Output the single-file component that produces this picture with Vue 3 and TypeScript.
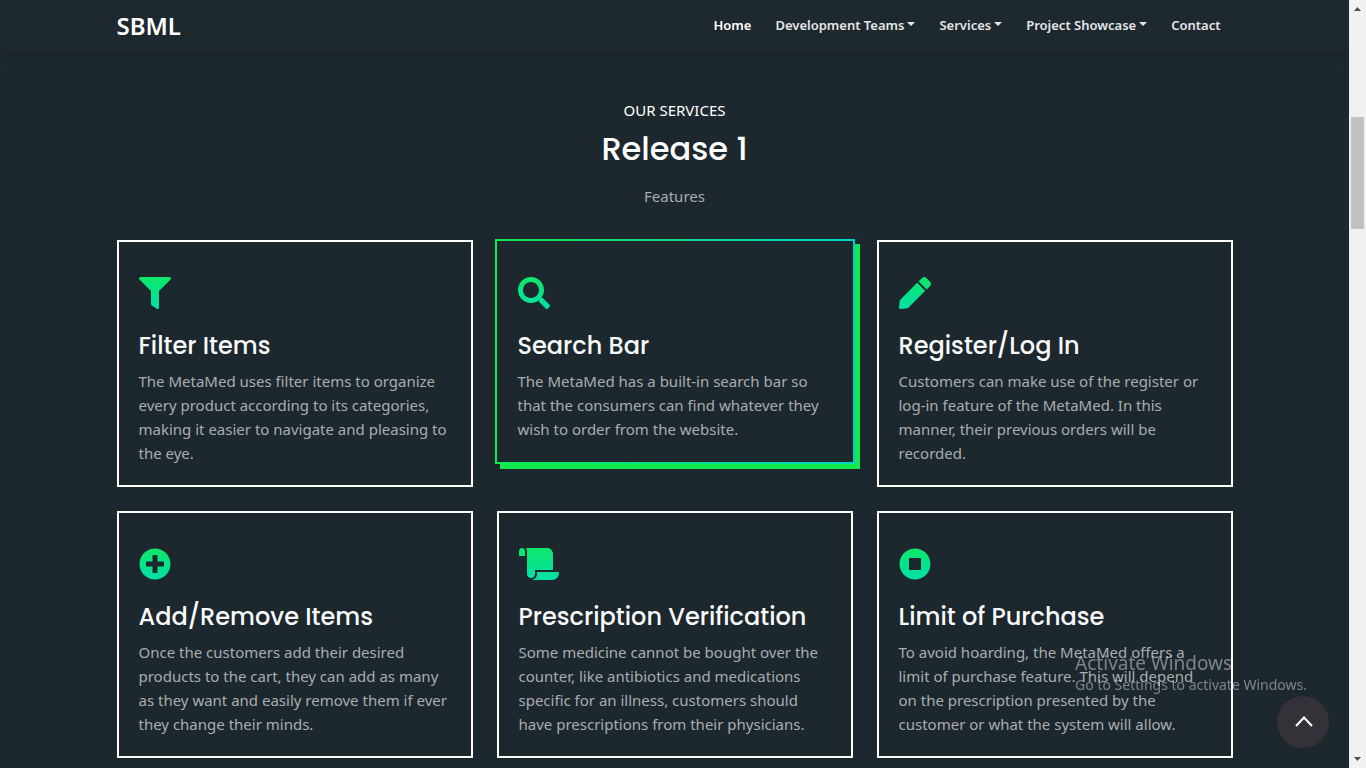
<script setup lang="ts">
interface NavItem {
  label: string
  menu: boolean
  active?: boolean
}

interface Feature {
  title: string
  text: string
  viewBox: string
  path: string
  wide?: boolean
  raised?: boolean
}

const navItems: NavItem[] = [
  { label: 'Home', menu: false, active: true },
  { label: 'Development Teams', menu: true },
  { label: 'Services', menu: true },
  { label: 'Project Showcase', menu: true },
  { label: 'Contact', menu: false },
]

const features: Feature[] = [
  {
    title: 'Filter Items',
    text: 'The MetaMed uses filter items to organize every product according to its categories, making it easier to navigate and pleasing to the eye.',
    viewBox: '0 0 512 512',
    path: 'M487.976 0H24.028C2.71 0-8.047 25.866 7.058 40.971L192 225.941V432c0 7.831 3.821 15.17 10.237 19.662l80 55.98C298.02 518.69 320 507.493 320 487.98V225.941l184.947-184.97C520.021 25.896 509.338 0 487.976 0z',
  },
  {
    title: 'Search Bar',
    text: 'The MetaMed has a built-in search bar so that the consumers can find whatever they wish to order from the website.',
    viewBox: '0 0 512 512',
    raised: true,
    path: 'M505 442.7L405.3 343c-4.5-4.5-10.6-7-17-7H372c27.6-35.3 44-79.7 44-128C416 93.1 322.9 0 208 0S0 93.1 0 208s93.1 208 208 208c48.3 0 92.7-16.4 128-44v16.3c0 6.4 2.5 12.5 7 17l99.7 99.7c9.4 9.4 24.6 9.4 33.9 0l28.3-28.3c9.4-9.4 9.4-24.6.1-34zM208 336c-70.7 0-128-57.2-128-128 0-70.7 57.2-128 128-128 70.7 0 128 57.2 128 128 0 70.7-57.2 128-128 128z',
  },
  {
    title: 'Register/Log In',
    text: 'Customers can make use of the register or log-in feature of the MetaMed. In this manner, their previous orders will be recorded.',
    viewBox: '0 0 512 512',
    path: 'M290.74 93.24l128.02 128.02-277.99 277.99-114.14 12.6C11.35 513.54-1.56 500.62.14 485.34l12.7-114.22 277.9-277.88zm207.2-19.06l-60.11-60.11c-18.75-18.75-49.16-18.75-67.91 0l-56.55 56.55 128.02 128.02 56.55-56.55c18.75-18.76 18.75-49.16 0-67.91z',
  },
  {
    title: 'Add/Remove Items',
    text: 'Once the customers add their desired products to the cart, they can add as many as they want and easily remove them if ever they change their minds.',
    viewBox: '0 0 512 512',
    path: 'M256 8C119 8 8 119 8 256s111 248 248 248 248-111 248-248S393 8 256 8zm144 276c0 6.6-5.4 12-12 12h-92v92c0 6.6-5.4 12-12 12h-56c-6.6 0-12-5.4-12-12v-92h-92c-6.6 0-12-5.4-12-12v-56c0-6.6 5.4-12 12-12h92v-92c0-6.6 5.4-12 12-12h56c6.6 0 12 5.4 12 12v92h92c6.6 0 12 5.4 12 12v56z',
  },
  {
    title: 'Prescription Verification',
    text: 'Some medicine cannot be bought over the counter, like antibiotics and medications specific for an illness, customers should have prescriptions from their physicians.',
    viewBox: '0 0 640 512',
    wide: true,
    path: 'M48 0C21.53 0 0 21.53 0 48v64c0 8.84 7.16 16 16 16h80V48C96 21.53 74.47 0 48 0zm208 412.57V352h288V96c0-52.94-43.06-96-96-96H111.59C121.74 13.41 128 29.92 128 48v368c0 38.87 34.65 69.65 74.75 63.12C234.22 474 256 444.46 256 412.57zM288 384v32c0 52.93-43.06 96-96 96h336c61.86 0 112-50.14 112-112 0-8.84-7.16-16-16-16H288z',
  },
  {
    title: 'Limit of Purchase',
    text: 'To avoid hoarding, the MetaMed offers a limit of purchase feature. This will depend on the prescription presented by the customer or what the system will allow.',
    viewBox: '0 0 512 512',
    path: 'M256 8C119 8 8 119 8 256s111 248 248 248 248-111 248-248S393 8 256 8zm96 328c0 8.8-7.2 16-16 16H176c-8.8 0-16-7.2-16-16V176c0-8.8 7.2-16 16-16h160c8.8 0 16 7.2 16 16v160z',
  },
]

const toTop = () => window.scrollTo({ top: 0, behavior: 'smooth' })
</script>

<template>
  <div class="window">
    <div class="page">
      <header class="topbar">
        <nav class="container nav">
          <a class="brand" href="#">SBML</a>
          <ul class="links">
            <li v-for="item in navItems" :key="item.label">
              <a href="#" class="link" :class="{ active: item.active }">
                {{ item.label }}<span v-if="item.menu" class="caret"></span>
              </a>
            </li>
          </ul>
        </nav>
      </header>

      <main class="container">
        <div class="intro">
          <p class="eyebrow">OUR SERVICES</p>
          <h1>Release 1</h1>
          <p class="sub">Features</p>
        </div>

        <section class="grid">
          <article v-for="(f, i) in features" :key="f.title" class="card" :class="{ raised: f.raised }">
            <svg class="icon" :class="{ wide: f.wide }" :viewBox="f.viewBox" aria-hidden="true">
              <defs>
                <linearGradient :id="'tint' + i" gradientUnits="userSpaceOnUse" x1="0" y1="0" x2="0" y2="512">
                  <stop offset="0" stop-color="#0de768" />
                  <stop offset="1" stop-color="#03dfa8" />
                </linearGradient>
              </defs>
              <path :d="f.path" :fill="`url(#tint${i})`" />
            </svg>
            <h2>{{ f.title }}</h2>
            <p>{{ f.text }}</p>
          </article>
        </section>
      </main>
    </div>

    <div class="scrollbar" aria-hidden="true">
      <svg class="arrow" viewBox="0 0 17 17"><path d="M5 11h7L8.500 7z" /></svg>
      <div class="track"><div class="thumb"></div></div>
      <svg class="arrow" viewBox="0 0 17 17"><path d="M5 6h7L8.500 10z" /></svg>
    </div>

    <div class="notice">
      <p class="notice-title">Activate Windows</p>
      <p class="notice-text">Go to Settings to activate Windows.</p>
    </div>

    <button class="to-top" type="button" aria-label="Back to top" @click="toTop">
      <svg viewBox="0 0 20 20" width="20" height="20"><path d="M3 14L11 5.500 19 14" /></svg>
    </button>
  </div>
</template>

<style>
body {
  margin: 0;
  background: #1d272e;
}
</style>

<style scoped>
.window {
  display: flex;
  height: 100vh;
  overflow: hidden;
  background: #1d272e;
  color: #fff;
  font-family: "Segoe UI", "Noto Sans", "Open Sans", sans-serif;
  font-size: 15px;
  line-height: 24px;
}
.page {
  flex: 1;
  min-width: 0;
}
.container {
  box-sizing: border-box;
  width: 100%;
  max-width: 1140px;
  margin: 0 auto;
  padding: 0 12px;
}
.topbar {
  background: #1e282f;
  box-shadow: 0 0 16px rgba(32, 28, 48, 0.2);
}
.nav {
  display: flex;
  align-items: center;
  justify-content: space-between;
  height: 51px;
}
.brand {
  color: #fff;
  font-size: 24px;
  font-weight: 600;
  text-decoration: none;
}
.links {
  display: flex;
  gap: 24px;
  margin: 0;
  padding: 0 12px 2px 0;
  list-style: none;
}
.link {
  display: flex;
  align-items: center;
  color: #e4e5e6;
  font-size: 13px;
  font-weight: 600;
  text-decoration: none;
}
.link.active {
  color: #fff;
}
.caret {
  margin: 0 0 2px 3px;
  border: 4px solid transparent;
  border-top-color: currentColor;
  border-bottom: 0;
}
.intro {
  padding: 47px 0 32px;
  text-align: center;
}
.intro p {
  margin: 0;
}
h1,
h2 {
  margin: 0;
  font-family: Poppins, Inter, sans-serif;
  font-weight: 500;
}
h1 {
  margin: 7px 0 15px;
  font-size: 32px;
  line-height: 40px;
}
.sub,
.card p {
  color: #a9adb0;
}
.grid {
  display: grid;
  grid-template-columns: repeat(3, minmax(0, 1fr));
  align-items: start;
  gap: 24px;
}
.card {
  padding: 35px 19px 20px 20px;
  border: 2px solid #fff;
}
.card.raised {
  margin: -1px -2px;
  padding: 36px 20px 21px 21px;
  border-image: linear-gradient(to right, #10ea50, #00d2c8) 1;
  box-shadow: 5px 5px 0 #10ea50;
}
.icon {
  display: block;
  width: 32px;
  height: 32px;
}
.icon.wide {
  width: 40px;
}
h2 {
  margin: 22px 0 9px;
  color: #f8f9fa;
  font-size: 24px;
  line-height: 29px;
  white-space: nowrap;
}
.card p {
  margin: 0;
}
.scrollbar {
  display: flex;
  flex-direction: column;
  flex: none;
  width: 17px;
  background: #f1f1f1;
}
.arrow {
  width: 17px;
  height: 17px;
  fill: #505050;
}
.track {
  flex: 1;
  padding: 100px 2px 0;
}
.thumb {
  height: 112px;
  background: #c1c1c1;
}
.notice {
  position: fixed;
  right: 59px;
  bottom: 73px;
  color: rgba(255, 255, 255, 0.42);
  pointer-events: none;
}
.notice p {
  margin: 0;
}
.notice .notice-title {
  font-size: 19px;
}
.notice .notice-text {
  font-size: 14px;
  line-height: 20px;
}
.to-top {
  position: fixed;
  right: 37px;
  bottom: 20px;
  display: flex;
  align-items: center;
  justify-content: center;
  width: 52px;
  height: 52px;
  padding: 0;
  border: 0;
  border-radius: 50%;
  background: #343138;
}
.to-top path {
  fill: none;
  stroke: #fff;
  stroke-width: 2;
}
</style>
